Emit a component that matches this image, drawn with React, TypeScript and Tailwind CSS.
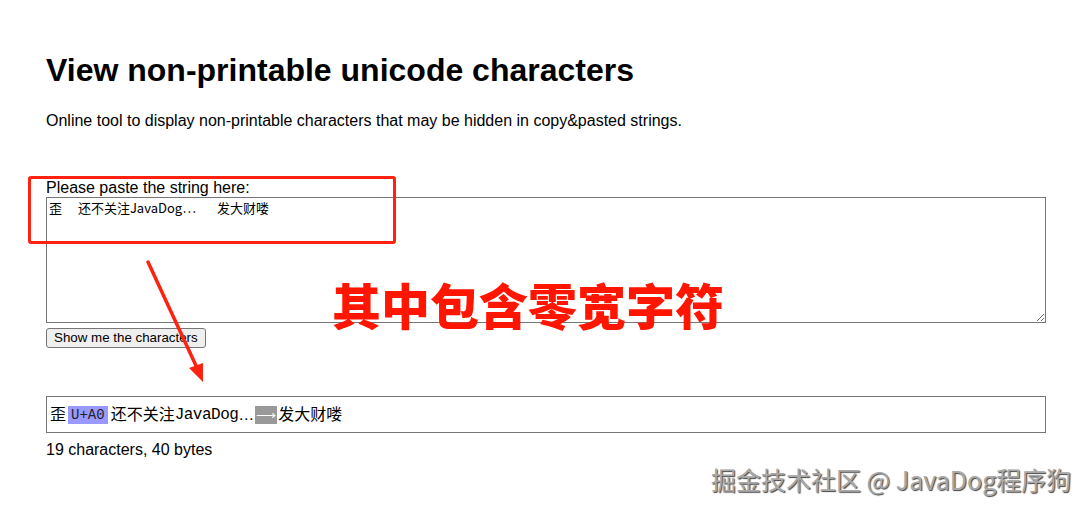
import React from "react";

export default function App() {
  const sans = { fontFamily: '"Liberation Sans", Arial, "Noto Sans CJK SC", sans-serif' };
  return (
    <div className="relative w-[1091px] h-[513px] bg-white overflow-hidden text-black" style={sans}>
      <div className="flex flex-col pl-[46px] pt-[52px]">
        <h1 className="text-[32px] font-bold leading-[37px] m-0">View non-printable unicode characters</h1>
        <p className="text-[16px] leading-[18px] mt-[23px]">
          Online tool to display non-printable characters that may be hidden in copy&amp;pasted strings.
        </p>
        <label className="text-[16px] leading-[18px] mt-[49px] block">Please paste the string here:</label>
        <textarea
          readOnly
          className="w-[1000px] h-[126px] border border-[#767676] px-[2px] py-[2px] text-[13px] leading-[16px] resize-y outline-none [tab-size:168px] block"
          style={{ fontFamily: '"Noto Sans CJK SC", monospace' }}
          defaultValue={"歪\u3000 还不关注JavaDog\u2026\u200b\t发大财喽"}
        />
        <div className="mt-[5px] flex">
          <button className="h-[20px] px-[7px] text-[13.33px] leading-[16px] bg-[#efefef] border border-[#767676] rounded-[3px]">
            Show me the characters
          </button>
        </div>
        <div className="w-[1000px] h-[37px] mt-[48px] border border-[#767676] flex items-center px-[3px] text-[16px]">
          <span>歪</span>
          <span
            className="bg-[#9999ff] text-[#222] px-[3px] text-[14px] leading-[18px] ml-[2px] mr-[3px]"
            style={{ fontFamily: '"Liberation Mono", monospace' }}
          >
            U+A0
          </span>
          <span>还不关注</span>
          <span className="tracking-[-0.5px]" style={{ fontFamily: '"Liberation Mono", monospace' }}>JavaDog</span>
          <span>…</span>
          <span className="bg-[#999999] text-white px-[1px] leading-[18px] text-[14px] ml-[1px] mr-[1px]">⟶</span>
          <span>发大财喽</span>
        </div>
        <p className="text-[16px] leading-[18px] mt-[8px]">19 characters, 40 bytes</p>
      </div>

      {/* red annotation rectangle */}
      <div className="absolute left-[28px] top-[176px] w-[368px] h-[68px] border-[3px] border-[#f21] rounded-[3px]" />

      {/* red arrow */}
      <svg className="absolute left-0 top-0" width="1091" height="513">
        <line x1="148" y1="262" x2="198" y2="370" stroke="#f21" strokeWidth="3.5" strokeLinecap="round" />
        <polygon points="203,382 189,368 203,363" fill="#f21" />
      </svg>

      {/* big red text */}
      <div
        className="absolute left-[332px] top-[274px] text-[49px] font-black leading-[60px] text-[#ff1500]"
        style={{ fontFamily: '"Noto Sans CJK SC", sans-serif' }}
      >
        其中包含零宽字符
      </div>

      {/* watermark */}
      <div
        className="absolute left-[711px] top-[463px] text-[25px] leading-[33px] text-[#a8a8a8]"
        style={{ fontFamily: '"Noto Sans CJK SC", sans-serif', textShadow: "1px 1px 1px #444, -1px -1px 0 #fff" }}
      >
        掘金技术社区 @ JavaDog程序狗
      </div>
    </div>
  );
}
